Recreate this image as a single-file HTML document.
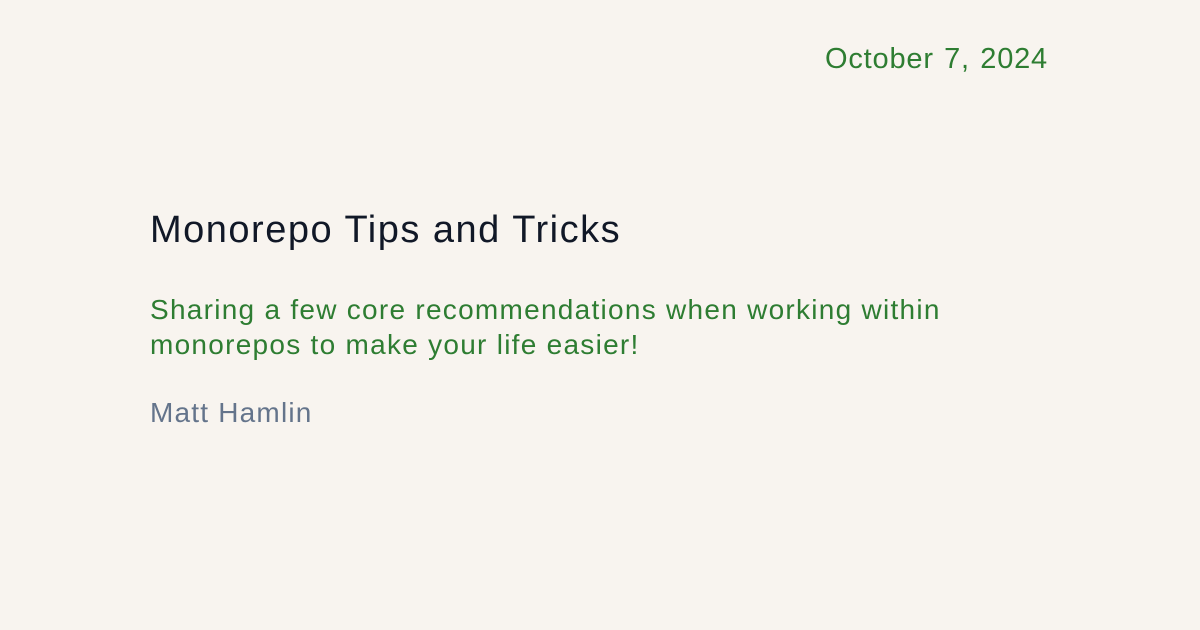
<!DOCTYPE html>
<html><head><meta charset="utf-8"><style>
html,body{margin:0;padding:0;}
body{width:1200px;height:630px;background:#f8f4ef;position:relative;overflow:hidden;font-family:"Liberation Sans",sans-serif;}
.date{position:absolute;right:152px;top:43px;font-size:29px;color:#2e7d32;letter-spacing:0.8px;word-spacing:1.5px;}
.title{position:absolute;left:150px;top:209px;font-size:38px;color:#111827;letter-spacing:1.5px;}
.desc{position:absolute;left:150px;top:292px;font-size:28px;line-height:35px;color:#2e7d32;width:900px;letter-spacing:1.27px;}
.author{position:absolute;left:150px;top:397px;font-size:28px;color:#64748b;letter-spacing:1.2px;}
</style></head><body>
<div class="date">October 7, 2024</div>
<div class="title">Monorepo Tips and Tricks</div>
<div class="desc">Sharing a few core recommendations when working within<br>monorepos to make your life easier!</div>
<div class="author">Matt Hamlin</div>
</body></html>
